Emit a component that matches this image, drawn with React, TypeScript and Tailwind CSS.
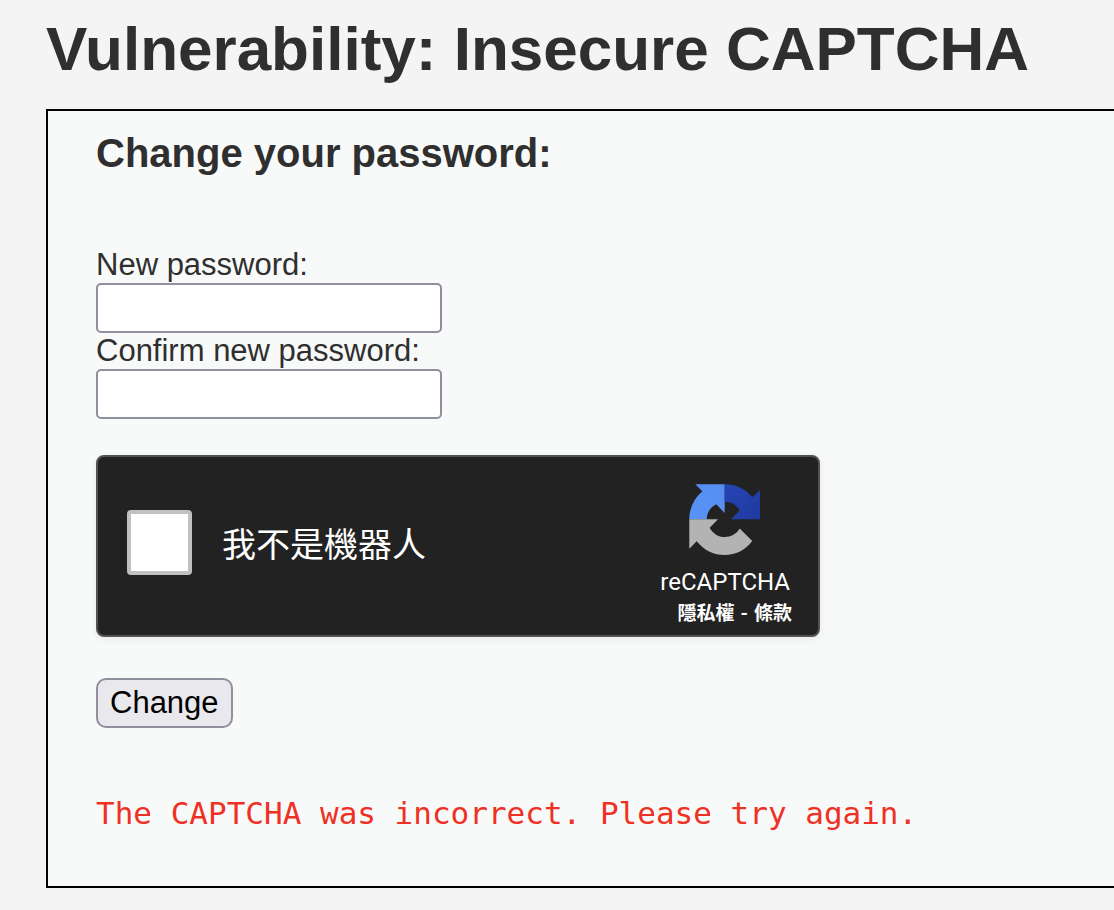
import { useState } from "react";

function RecaptchaLogo() {
  return (
    <svg viewBox="0 0 72 72" className="size-18" aria-hidden="true">
      <defs>
        <linearGradient id="light" x1="0" y1="1" x2="1" y2="0">
          <stop offset="0" stopColor="#5a94f6" />
          <stop offset="1" stopColor="#568df0" />
        </linearGradient>
        <linearGradient id="dark" x1="0" y1="0" x2="1" y2="1">
          <stop offset="0" stopColor="#2645b5" />
          <stop offset="1" stopColor="#1f3a9f" />
        </linearGradient>
      </defs>
      <path
        fill="url(#light)"
        d="M6.3 .3H35.7V29L27.3 20.3Q18 25 17.7 35.2H.3C.3 24.5 5 14.5 13.3 7.3Z"
      />
      <path
        fill="url(#dark)"
        d="M35.7 .3C46.5 .3 56.5 4.8 63.3 13.2L71 6.3V35.2H42L50.7 26.2Q45.5 17.8 35.7 17.7Z"
      />
      <path
        fill="#b3b3b3"
        d="M.3 35.2H29L20.7 43.7C24 49.8 29.5 53 35.7 53C42 53 47.5 50 50.7 44.5L63.2 57C56.5 66 46.5 71 35.7 71C24.5 71 14.5 66 7.7 57.2L.3 64.7Z"
      />
    </svg>
  );
}

function PasswordField({ id, label }: { id: string; label: string }) {
  const [value, setValue] = useState("");
  return (
    <div className="flex flex-col items-start">
      <label htmlFor={id}>{label}</label>
      <input
        id={id}
        type="password"
        value={value}
        onChange={(e) => setValue(e.target.value)}
        className="h-[50px] w-[346px] max-w-full rounded-[5px] border-2 border-[#8f8f9d] bg-white px-1"
      />
    </div>
  );
}

function Recaptcha() {
  return (
    <div className="flex h-[182px] w-[724px] max-w-full items-center justify-between rounded-lg border-2 border-[#525252] bg-[#222] pr-[26px] pl-[29px] font-['Roboto','Noto_Sans_CJK_TC',sans-serif] text-white shadow-[0_2px_6px_1px_rgba(0,0,0,0.06)]">
      <div className="flex items-center gap-[30px] pb-[7px]">
        <input
          id="robot"
          type="checkbox"
          className="size-[65px] appearance-none rounded-[4px] border-4 border-[#c1c1c1] bg-white checked:bg-[#4a90e2]"
        />
        <label htmlFor="robot" className="pt-1 text-[34px] leading-10">
          我不是機器人
        </label>
      </div>
      <div className="flex flex-col items-end pt-[19px]">
        <div className="flex flex-col items-center gap-3 pr-[2px]">
          <RecaptchaLogo />
          <span className="text-[24px] leading-7">reCAPTCHA</span>
        </div>
        <div className="mt-1 flex gap-[6px] text-[19px] leading-7 font-bold">
          <a href="#privacy">隱私權</a>
          <span>-</span>
          <a href="#terms">條款</a>
        </div>
      </div>
    </div>
  );
}

export default function App() {
  return (
    <main className="min-h-screen bg-[#f4f4f4] pt-[13px] pb-[22px] pl-[46px] font-['Liberation_Sans',Arial,sans-serif] text-[31px] leading-9 text-[#2f2f2f]">
      <h1 className="mb-6 text-[62px] leading-[72px] font-bold">
        Vulnerability: Insecure CAPTCHA
      </h1>
      <section className="border-2 border-r-0 border-black bg-[#f8faf9] px-12 pt-[18px] pb-[55px]">
        <h2 className="mb-[70px] text-[40px] leading-12 font-bold">
          Change your password:
        </h2>
        <form onSubmit={(e) => e.preventDefault()}>
          <PasswordField id="new-password" label="New password:" />
          <PasswordField id="confirm-password" label="Confirm new password:" />
          <div className="mt-9 mb-[41px]">
            <Recaptcha />
          </div>
          <button
            type="submit"
            className="block h-[50px] rounded-[10px] border-2 border-[#8f8f9d] bg-[#e9e9ed] px-3 text-black"
          >
            Change
          </button>
        </form>
        <pre className="mt-[67px] font-['DejaVu_Sans_Mono',monospace] whitespace-pre-wrap text-[#ee3124]">
          The CAPTCHA was incorrect. Please try again.
        </pre>
      </section>
    </main>
  );
}
